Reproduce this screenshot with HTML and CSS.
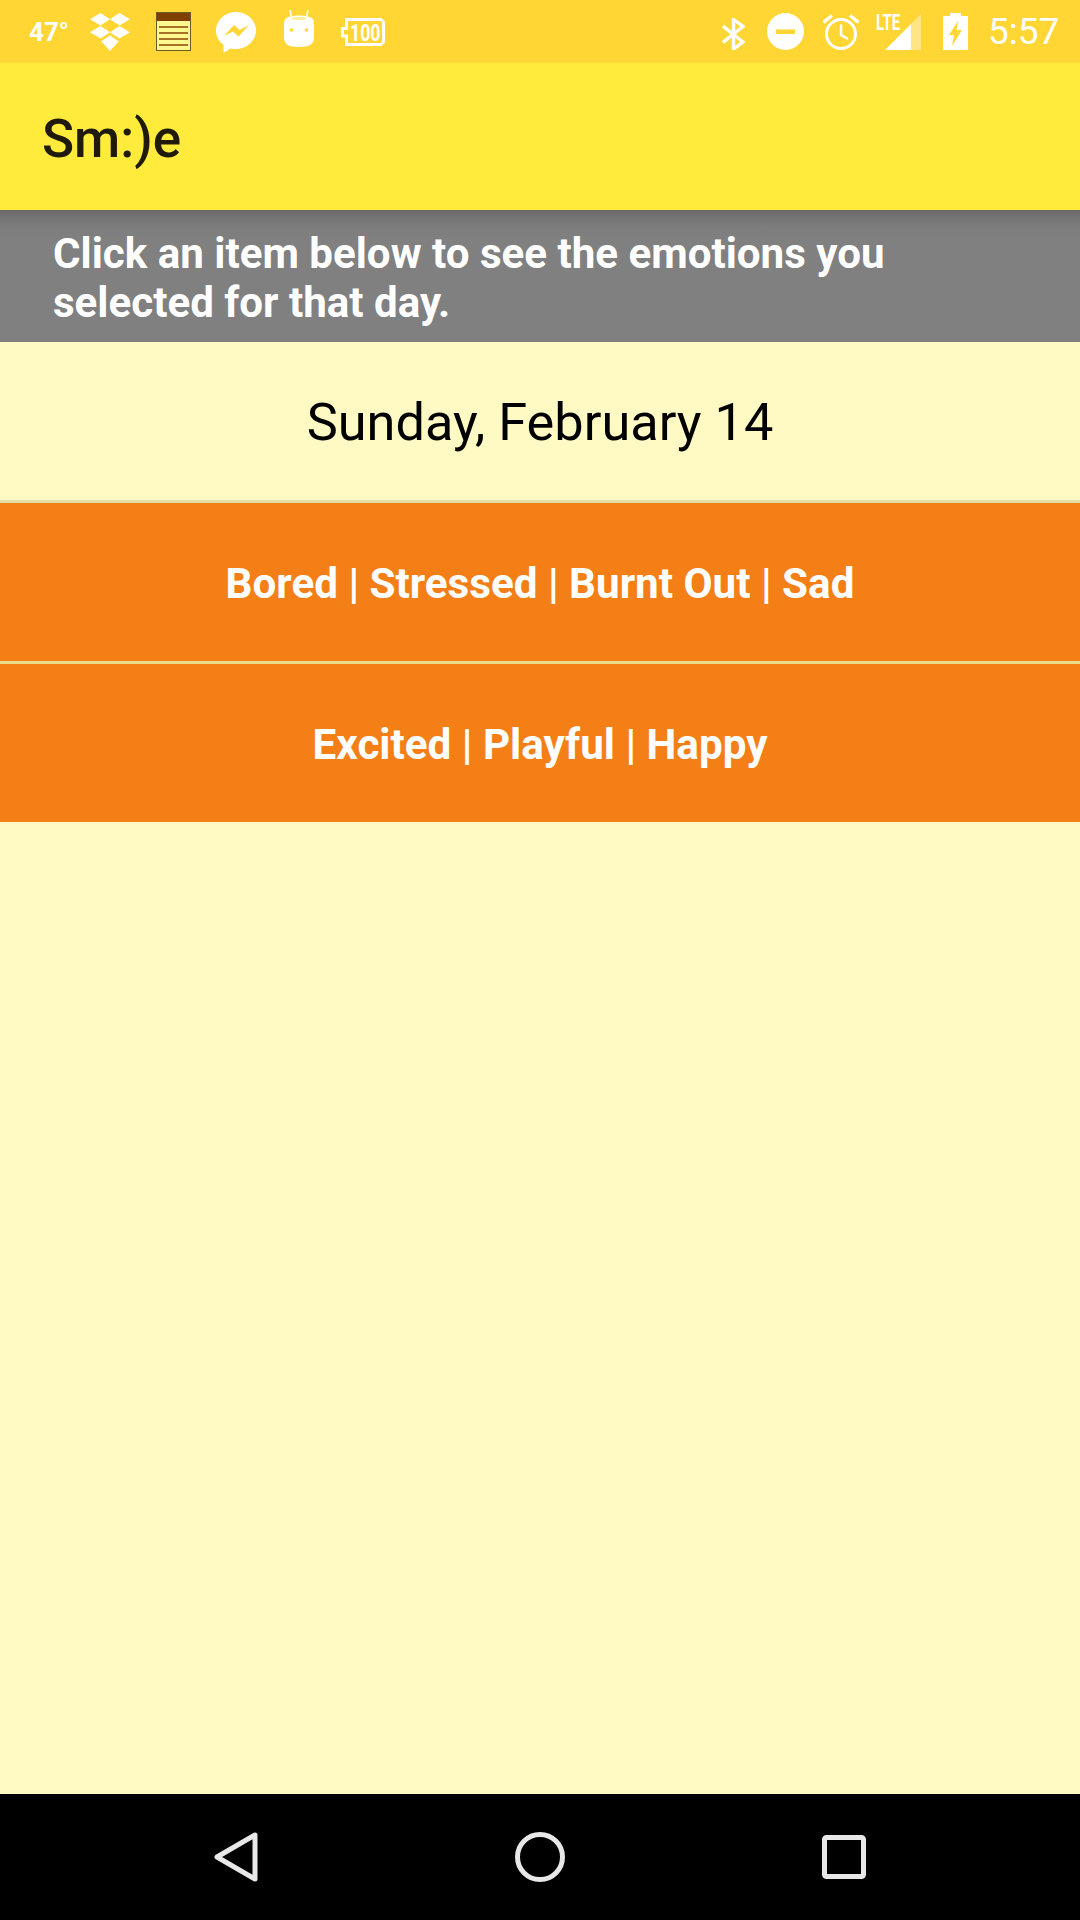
FILE: index.html
```html
<!DOCTYPE html>
<html lang="en">
<head>
<meta charset="utf-8">
<title>Sm:)e</title>
<link rel="stylesheet" href="styles.css">
</head>
<body>
<div class="phone">
  <header class="status">
    <div class="status-left">
      <span class="temp">47°</span>
      <svg class="i-drop" viewBox="0 0 40 38"><path fill="#fff" d="M10.500 0 20 6.300 10.500 12.500 0 6.300ZM29.500 0 40 6.300 29.500 12.500 20 6.300ZM10.500 13 20 19.300 10.500 25.500 0 19.300ZM29.500 13 40 19.300 29.500 25.500 20 19.300ZM11 28 20 22 29 28 20 38Z"/><path fill="none" stroke="#ffd633" stroke-width="1.200" d="M11.500 27.500 20 21.500 28.500 27.500"/></svg>
      <svg class="i-note" viewBox="0 0 35 39"><rect width="35" height="39" fill="#6b5a2a"/><rect x="1" y="1" width="33" height="8" fill="#7f3f00"/><rect x="1" y="9" width="33" height="29" fill="#fdf98e"/><path stroke="#a9702a" stroke-width="2" d="M3 15H32M3 21H32M3 27H32M3 33H32"/></svg>
      <svg class="i-msg" viewBox="0 0 40 41"><path fill="#fff" d="M20 0C9 0 0 8.300 0 18.500 0 24.500 3 29.500 7.500 33L7.500 41 14.500 36.500C16.300 37 18 37 20 37 31 37 40 28.700 40 18.500 40 8.300 31 0 20 0Z"/><path fill="#ffd633" d="M8 24 18 13 23.500 18 33 13 22.500 24.500 17 19.500Z"/></svg>
      <svg class="i-droid" viewBox="0 0 30 37"><path stroke="#fff" stroke-width="1.500" d="M6 0 8 9M24 0 22 9"/><path fill="#fff" d="M6 6.500C11 5 19 5 24 6.500 28 7.500 30 9 30 14V27C30 34 26 37 15 37 4 37 0 34 0 27V14C0 9 2 7.500 6 6.500Z"/><path fill="#fcef9c" d="M6 8C11 6.500 19 6.500 24 8 19 11 11 11 6 8Z"/><circle cx="7.500" cy="20" r="1.800" fill="#ffd633"/><circle cx="22.500" cy="20" r="1.800" fill="#ffd633"/></svg>
      <svg class="i-batt" viewBox="0 0 44 28"><path fill="none" stroke="#fff" stroke-width="3" d="M5.500 1.500H40L42.500 4V24L40 26.500H5.500V18H1.500V10.500H5.500Z"/><text class="batt-text" transform="translate(9 22.500) scale(.77 1)">100</text></svg>
    </div>
    <div class="status-right">
      <svg class="i-bt" viewBox="0 0 23 32"><path fill="none" stroke="#fff" stroke-width="3.400" d="M1 8 21 24 11.500 31V1.500L21 8.500 1 24.500"/></svg>
      <svg class="i-dnd" viewBox="0 0 37 37"><circle cx="18.500" cy="18.500" r="18.500" fill="#fff"/><rect x="9" y="16.500" width="19" height="4.500" fill="#ffd633"/></svg>
      <svg class="i-alarm" viewBox="0 0 36 37"><circle cx="18" cy="21" r="14.500" fill="none" stroke="#fff" stroke-width="3"/><path fill="none" stroke="#fff" stroke-width="2.500" d="M18 11.500V22L25 26"/><path fill="none" stroke="#fff" stroke-width="3.200" d="M0.500 9.500 9 2.500M35.500 9.500 27 2.500"/></svg>
      <div class="signal">
        <span class="lte">LTE</span>
        <svg class="i-signal" viewBox="0 0 36 36"><path fill="#fff" fill-opacity=".4" d="M36 0V36H26V10Z"/><path fill="#fff" d="M26 10V36H0Z"/></svg>
      </div>
      <svg class="i-charge" viewBox="0 0 25 37"><path fill="#fff" fill-rule="evenodd" d="M7 0H18V3H25V37H0V3H7ZM15 8 6 22H11L9 33 19 17H13.500Z"/></svg>
      <span class="clock">5:57</span>
    </div>
  </header>
  <div class="appbar"><span class="title">Sm:)e</span></div>
  <div class="hint"><p class="hint-text">Click an item below to see the emotions you selected for that day.</p></div>
  <main class="list">
    <div class="row date">Sunday, February 14</div>
    <div class="row entry">Bored | Stressed | Burnt Out | Sad</div>
    <div class="row entry">Excited | Playful | Happy</div>
  </main>
  <nav class="navbar">
    <svg class="nav-back" viewBox="0 0 44 50"><path fill="none" stroke="#e8e8e8" stroke-width="5" stroke-linejoin="round" d="M41 3V47L3 25Z"/></svg>
    <svg class="nav-home" viewBox="0 0 50 50"><circle cx="25" cy="25" r="22.500" fill="none" stroke="#e8e8e8" stroke-width="5"/></svg>
    <svg class="nav-recent" viewBox="0 0 44 44"><rect x="2.500" y="2.500" width="39" height="39" rx="2" fill="none" stroke="#e8e8e8" stroke-width="5"/></svg>
  </nav>
</div>
</body>
</html>
```
FILE: styles.css
```css
* { box-sizing: border-box; margin: 0; padding: 0; }
html, body { width: 1080px; height: 1920px; overflow: hidden; }
body { font-family: Roboto, sans-serif; background: #fff9c4; }
.phone { width: 1080px; height: 1920px; display: flex; flex-direction: column; }

.status { height: 63px; background: #ffd633; display: flex; justify-content: space-between; align-items: center; padding: 0 21px 0 29px; color: #fff; flex: none; }
.status-left, .status-right { display: flex; align-items: center; }
.temp { font-weight: 700; font-size: 26px; width: 61px; }
.i-drop { width: 40px; height: 38px; margin-right: 26px; }
.i-note { width: 35px; height: 39px; margin-right: 25px; }
.i-msg { width: 40px; height: 41px; margin-right: 28px; margin-top: 2px; }
.i-droid { width: 30px; height: 37px; margin-right: 27px; margin-bottom: 6px; }
.i-batt { width: 44px; height: 28px; }
.batt-text { font-family: Roboto, sans-serif; font-size: 23px; font-weight: 700; fill: #fff; }
.i-bt { width: 23px; height: 32px; margin-right: 22px; margin-top: 5px; }
.i-dnd { width: 37px; height: 37px; margin-right: 19px; }
.i-alarm { width: 36px; height: 37px; margin-right: 17px; }
.signal { position: relative; width: 45px; height: 36px; margin-right: 22px; }
.lte { position: absolute; left: 0; top: -1px; font-weight: 700; font-size: 22px; line-height: 20px; transform: scaleX(.68); transform-origin: left top; }
.i-signal { position: absolute; right: 0; top: 0; width: 36px; height: 36px; }
.i-charge { width: 25px; height: 37px; margin-right: 20px; }
.clock { font-size: 37px; font-weight: 400; width: 71px; white-space: nowrap; }

.appbar { height: 147px; background: #ffeb3b; display: flex; align-items: center; padding: 4px 42px 0; flex: none; }
.title { font-size: 53px; font-weight: 500; color: #1f1a0a; }

.hint { height: 132px; flex: none; padding: 19px 53px 0; color: #fff; background: linear-gradient(#6a6a6a 0, #7d7d7d 16px, #808080 30px); }
.hint-text { font-size: 42.1px; font-weight: 700; line-height: 49px; width: 900px; }

.list { flex: 1; display: flex; flex-direction: column; }
.row { display: flex; align-items: center; justify-content: center; flex: none; }
.date { height: 161px; padding-top: 2px; font-size: 52.3px; color: #000; border-bottom: 3px solid #e2dca6; }
.entry { height: 158px; padding-top: 2px; background: #f57f17; color: #fff; font-size: 42.2px; font-weight: 700; }
.entry + .entry { height: 161px; border-top: 3px solid #e9db8a; }

.navbar { height: 126px; flex: none; background: #000; display: flex; align-items: center; padding-left: 214px; }
.nav-back { width: 44px; height: 50px; margin-right: 257px; }
.nav-home { width: 50px; height: 50px; margin-right: 257px; }
.nav-recent { width: 44px; height: 44px; }
```
